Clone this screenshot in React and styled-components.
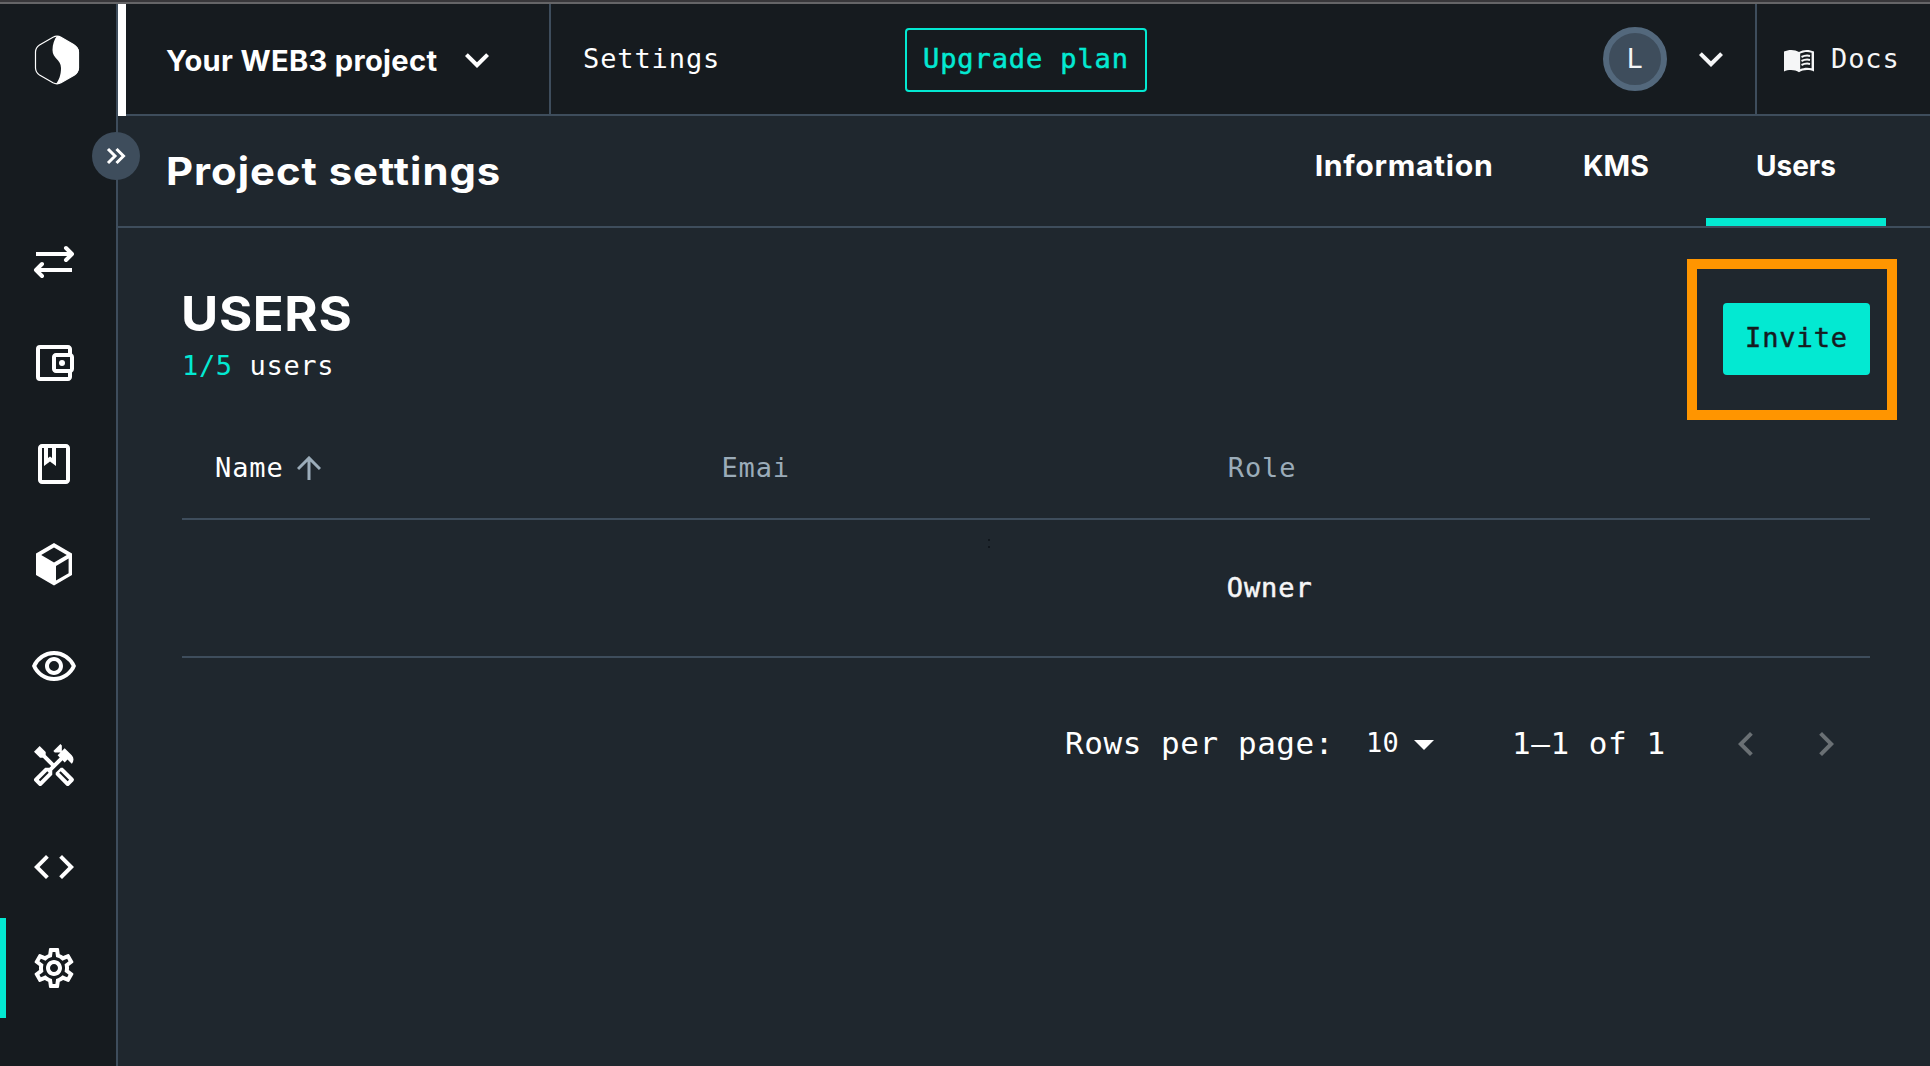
import React from "react";
import styled, { createGlobalStyle, css } from "styled-components";
import {
  MdCode,
  MdExpandMore,
  MdOutlineAccountBalanceWallet,
  MdOutlineClass,
  MdOutlineHandyman,
  MdOutlineRemoveRedEye,
  MdOutlineSettings,
  MdChevronLeft,
  MdChevronRight,
} from "react-icons/md";

const color = {
  bar: "#161b1f",
  page: "#1f272e",
  line: "#3e4d5c",
  accent: "#03e9d2",
  muted: "#9bacb9",
  text: "#f5f6f7",
};

const mono = `"DejaVu Sans Mono", "Liberation Mono", monospace`;
const display = `Inter, "Liberation Sans", sans-serif`;

const GlobalStyle = createGlobalStyle`
  *, *::before, *::after { box-sizing: border-box; }
  body { margin: 0; background: ${color.page}; overflow: hidden; }
  svg { display: block; flex: none; }
  button { font: inherit; color: inherit; background: none; border: 0; padding: 0; letter-spacing: inherit; }
`;

const Window = styled.div`
  width: 1930px;
  height: 1066px;
  display: flex;
  flex-direction: column;
  overflow: hidden;
  color: #fff;
  background: ${color.page};
  font-family: ${mono};
  font-size: 27px;
  letter-spacing: 0.9px;
  line-height: 32px;
  white-space: nowrap;
`;

const TopEdge = styled.div`
  flex: none;
  height: 4px;
  background: #38373a;
  border-bottom: 2px solid #656567;
`;

const Shell = styled.div`
  flex: 1;
  min-height: 0;
  display: grid;
  grid-template-columns: 118px 1fr;
`;

const Sidebar = styled.aside`
  position: relative;
  display: flex;
  flex-direction: column;
  background: ${color.bar};
  border-right: 2px solid ${color.line};
`;

const LogoBox = styled.div`
  height: 208px;
  padding: 31px 0 0 34px;
`;

const Nav = styled.nav`
  display: flex;
  flex-direction: column;
  gap: 0.88px;
`;

const NavItem = styled.a`
  height: 100px;
  display: flex;
  align-items: center;
  padding-left: ${(p) => (p.$active ? 24 : 30)}px;
  ${(p) => p.$active && css`border-left: 6px solid ${color.accent};`}
`;

const ExpandToggle = styled.button`
  && {
    position: absolute;
    top: 128px;
    right: -24px;
    width: 48px;
    height: 48px;
    border-radius: 50%;
    background: ${color.line};
    display: grid;
    place-items: center;
    z-index: 2;
  }
`;

const Main = styled.main`
  min-width: 0;
  display: flex;
  flex-direction: column;
`;

const Header = styled.header`
  height: 112px;
  flex: none;
  display: flex;
  align-items: stretch;
  background: ${color.bar};
  border-bottom: 2px solid ${color.line};
`;

const ProjectPicker = styled.div`
  width: 431px;
  height: 112px;
  margin-bottom: -2px;
  display: flex;
  align-items: flex-start;
  padding: 41px 0 0 40px;
  border-left: 8px solid #fff;
  font-family: ${display};
  font-weight: 700;
  font-size: 28px;
  letter-spacing: 0.3px;
`;

const ProjectName = styled.span`
  width: 287px;
  transform: scaleX(1.04);
  transform-origin: left;
`;

const PickerChevron = styled(MdExpandMore)`
  margin-top: -9px;
`;

const SettingsCell = styled.div`
  height: 110px;
  flex: 1;
  display: flex;
  align-items: flex-start;
  border-left: 2px solid ${color.line};
`;

const HeaderLabel = styled.span`
  width: 322px;
  margin: 39px 0 0 32px;
`;

const UpgradeButton = styled.button`
  && {
    width: 242px;
    height: 64px;
    margin-top: 24px;
    padding-bottom: 3px;
    border: 2px solid ${color.accent};
    border-radius: 4px;
    color: ${color.accent};
    -webkit-text-stroke: 0.5px;
  }
`;

const Account = styled.div`
  width: 152px;
  display: flex;
  align-items: flex-start;
  padding-top: 23px;
  gap: 20px;
  color: ${color.text};
`;

const Avatar = styled.div`
  width: 64px;
  height: 64px;
  border-radius: 50%;
  border: 6px solid #53687c;
  background: ${color.line};
  display: grid;
  place-items: center;
  padding-bottom: 1px;
`;

const AccountChevron = styled(MdExpandMore)`
  margin-top: 8px;
`;

const DocsLink = styled.a`
  width: 175px;
  height: 110px;
  display: flex;
  align-items: flex-start;
  padding: 39px 0 0 27px;
  gap: 17px;
  border-left: 2px solid ${color.line};
  color: ${color.text};
`;

const DocsIcon = styled.svg`
  margin-top: 6px;
`;

const TitleBar = styled.section`
  height: 112px;
  flex: none;
  display: flex;
  justify-content: space-between;
  padding: 0 44px 0 48px;
  border-bottom: 2px solid ${color.line};
  font-family: ${display};
  font-weight: 700;
`;

const PageTitle = styled.h1`
  margin: 31px 0 0;
  font-size: 38px;
  line-height: 48px;
  font-weight: 700;
  letter-spacing: 0.9px;
  transform: scaleX(1.1);
  transform-origin: left;
`;

const Tabs = styled.div`
  display: flex;
`;

const Tab = styled.div`
  width: ${(p) => p.$width}px;
  padding-top: 34px;
  text-align: center;
  font-size: 28px;
  letter-spacing: ${(p) => p.$spacing}px;
  border-bottom: 8px solid ${(p) => (p.$active ? color.accent : "transparent")};
`;

const TabLabel = styled.span`
  display: block;
  transform: scaleX(${(p) => p.$stretch});
`;

const Content = styled.section`
  padding: 53px 60px 0 64px;
`;

const ContentHead = styled.div`
  height: 171px;
  display: flex;
  justify-content: space-between;
`;

const SectionTitle = styled.h2`
  margin: 3px 0 0 -1px;
  font-family: ${display};
  font-size: 48px;
  line-height: 60px;
  font-weight: 700;
  letter-spacing: 0.6px;
  transform: scaleX(1.06);
  transform-origin: left;
`;

const SeatCount = styled.p`
  margin: 6px 0 0;
  letter-spacing: 0.65px;
  em { font-style: normal; color: ${color.accent}; }
`;

const InviteArea = styled.div`
  position: relative;
  padding-top: 22px;
`;

const InviteButton = styled.button`
  && {
    width: 147px;
    height: 72px;
    padding-bottom: 2px;
    border-radius: 4px;
    background: ${color.accent};
    color: ${color.bar};
    -webkit-text-stroke: 0.5px;
  }
`;

const Highlight = styled.div`
  position: absolute;
  top: -22px;
  right: -27px;
  width: 210px;
  height: 161px;
  border: 10px solid #ff9500;
`;

const Row = styled.div`
  display: grid;
  grid-template-columns: 30% 30% 40%;
  align-items: start;
  height: ${(p) => p.$height}px;
  border-bottom: 2px solid ${color.line};
  color: ${(p) => p.$color};
`;

const Cell = styled.div`
  display: flex;
  align-items: flex-start;
  gap: 13px;
  padding: ${(p) => p.$top}px 0 0 ${(p) => p.$left || 33}px;
`;

const SortedLabel = styled.span`
  color: #fff;
`;

const SortArrow = styled.svg`
  margin-top: 4px;
`;

const OwnerRole = styled.span`
  -webkit-text-stroke: 0.5px;
`;

const Pagination = styled.div`
  display: flex;
  align-items: flex-start;
  padding: 66px 20px 0 0;
  justify-content: flex-end;
  font-size: 31px;
  letter-spacing: 0.55px;
  line-height: 38px;
`;

const RowsLabel = styled.span`
  width: 301px;
`;

const PageSize = styled.span`
  width: 146px;
  display: flex;
  gap: 15px;
  font-size: 27px;
  letter-spacing: 0.2px;
`;

const Caret = styled.svg`
  margin-top: 16px;
`;

const RangeLabel = styled.span`
  width: 210px;
`;

const PageArrows = styled.span`
  display: flex;
  gap: 32px;
  color: #6a7074;
  margin-top: -4px;
`;

const Speck = styled.svg`
  position: absolute;
  left: 988px;
  top: 537px;
`;

const TransferIcon = () => (
  <svg width="48" height="48" viewBox="0 0 48 48" fill="none" stroke="#fff" strokeWidth="4">
    <path d="M6 16H41M42 32H7" />
    <path d="M36 10l6 6-6 6M12 26l-6 6 6 6" strokeLinecap="round" strokeLinejoin="round" />
  </svg>
);

const CubeIcon = () => (
  <svg width="48" height="48" viewBox="0 0 48 48" fill="#fff">
    <path
      fillRule="evenodd"
      d="M24 2 42 12.5V34L24 44.5 6 34V12.5ZM24 6.5 11.2 14 24 21.4 36.8 14ZM38.6 17.6 26 25V39.6L38.6 32.2Z"
    />
  </svg>
);

const BookIcon = () => (
  <DocsIcon width="30" height="24" viewBox="0 0 30 24">
    <path
      d="M0 2.500C4.500 .3 11 .3 15 3C19 .3 25.500 .3 30 2.500V22.500C25.500 20.500 19 20.500 15 23.300C11 20.500 4.500 20.500 0 22.500Z"
      fill={color.text}
    />
    <path d="M16.200 4.600C20 2.600 24 2.500 27.600 3.700V19.300C24 18.200 19.500 18.500 16.200 20.200Z" fill={color.bar} />
    <path
      d="M17.500 8C20 6.700 23 6.300 26 6.900M17.500 12C20 10.700 23 10.300 26 10.900M17.500 16C20 14.700 23 14.300 26 14.900"
      fill="none"
      stroke={color.text}
      strokeWidth="2"
    />
  </DocsIcon>
);

const Logo = () => (
  <svg width="46" height="50" viewBox="0 0 46 50">
    <path
      d="M19 2.2Q23 .2 27 2.2L39.500 9.500Q44.200 12.500 44.500 17V33Q44.200 37.500 40.500 40L27 47.800Q23 49.800 19 47.800L5.500 40Q1.700 37.500 1.500 33V17Q1.700 12.500 5.500 10Z"
      fill="none"
      stroke="#fff"
      strokeWidth="1.200"
    />
    <path
      d="M23 1Q25 1 27 2.200L40 9.800Q44.800 12.500 45 17V33Q44.800 37.500 40.500 40L27 47.800Q25 49 22 49C25 45 27 40 27 33C27 24 18.500 24 18.500 15C18.500 9 20.500 4 23 1Z"
      fill="#fff"
    />
  </svg>
);

const navItems = [
  ["transfer", <TransferIcon />],
  ["wallet", <MdOutlineAccountBalanceWallet size={48} />],
  ["contacts", <MdOutlineClass size={48} />],
  ["assets", <CubeIcon />],
  ["monitor", <MdOutlineRemoveRedEye size={48} />],
  ["tools", <MdOutlineHandyman size={48} />],
  ["code", <MdCode size={48} />],
  ["settings", <MdOutlineSettings size={48} />],
];

export default function App() {
  return (
    <Window>
      <GlobalStyle />
      <TopEdge />
      <Shell>
        <Sidebar>
          <LogoBox>
            <Logo />
          </LogoBox>
          <Nav>
            {navItems.map(([id, icon]) => (
              <NavItem key={id} $active={id === "settings"}>
                {icon}
              </NavItem>
            ))}
          </Nav>
          <ExpandToggle>
            <svg width="22" height="20" viewBox="0 0 22 20" fill="none" stroke="#fff" strokeWidth="3">
              <path d="M3 3l7 7-7 7M11.500 3l7 7-7 7" />
            </svg>
          </ExpandToggle>
        </Sidebar>
        <Main>
          <Header>
            <ProjectPicker>
              <ProjectName>Your WEB3 project</ProjectName>
              <PickerChevron size={48} />
            </ProjectPicker>
            <SettingsCell>
              <HeaderLabel>Settings</HeaderLabel>
              <UpgradeButton>Upgrade plan</UpgradeButton>
            </SettingsCell>
            <Account>
              <Avatar>L</Avatar>
              <AccountChevron size={48} />
            </Account>
            <DocsLink>
              <BookIcon />
              Docs
            </DocsLink>
          </Header>
          <TitleBar>
            <PageTitle>Project settings</PageTitle>
            <Tabs>
              <Tab $width={244} $spacing={0.6}>
                <TabLabel $stretch={1.08}>Information</TabLabel>
              </Tab>
              <Tab $width={180} $spacing={0}>
                <TabLabel $stretch={1.02}>KMS</TabLabel>
              </Tab>
              <Tab $width={180} $spacing={0} $active>
                <TabLabel $stretch={1}>Users</TabLabel>
              </Tab>
            </Tabs>
          </TitleBar>
          <Content>
            <ContentHead>
              <div>
                <SectionTitle>USERS</SectionTitle>
                <SeatCount>
                  <em>1/5</em> users
                </SeatCount>
              </div>
              <InviteArea>
                <InviteButton>Invite</InviteButton>
                <Highlight />
              </InviteArea>
            </ContentHead>
            <Row $height={68} $color={color.muted}>
              <Cell $top={0}>
                <SortedLabel>Name</SortedLabel>
                <SortArrow width="24" height="24" viewBox="0 0 24 24" fill="none" stroke={color.muted} strokeWidth="3">
                  <path d="M12 24V2M1 13 12 2l11 11" />
                </SortArrow>
              </Cell>
              <Cell $top={0}>Emai</Cell>
              <Cell $top={0}>Role</Cell>
            </Row>
            <Row $height={138} $color={color.text}>
              <Cell $top={52} />
              <Cell $top={52} />
              <Cell $top={52} $left={32}>
                <OwnerRole>Owner</OwnerRole>
              </Cell>
            </Row>
            <Pagination>
              <RowsLabel>Rows per page:</RowsLabel>
              <PageSize>
                10
                <Caret width="20" height="10" viewBox="0 0 20 10" fill="#fff">
                  <path d="M0 0h20L10 10z" />
                </Caret>
              </PageSize>
              <RangeLabel>1–1 of 1</RangeLabel>
              <PageArrows>
                <MdChevronLeft size={48} />
                <MdChevronRight size={48} />
              </PageArrows>
            </Pagination>
          </Content>
        </Main>
      </Shell>
      <Speck width="4" height="12" viewBox="0 0 4 12" fill="#10161c">
        <path d="M0 2h2v2H0zM0 9h2v2H0z" />
      </Speck>
    </Window>
  );
}
